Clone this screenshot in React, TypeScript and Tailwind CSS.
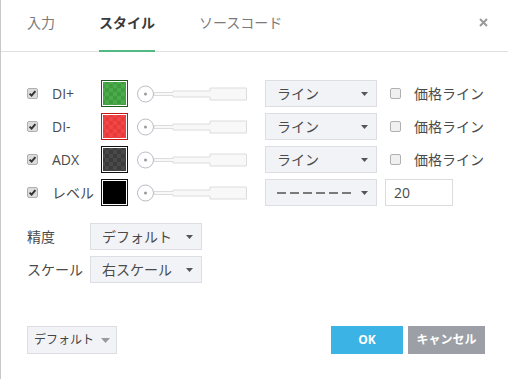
const rows = [
  { label: "DI+", border: "#1e5a1e", a: "#3f9c3f", b: "#4aab4a" },
  { label: "DI-", border: "#c01818", a: "#f04646", b: "#e83a3a" },
  { label: "ADX", border: "#111111", a: "#3c3c3c", b: "#4a4a4a" },
];

function Check({ checked }: { checked: boolean }) {
  return (
    <svg width="11" height="11" viewBox="0 0 11 11" className="shrink-0">
      <rect x="0.5" y="0.5" width="10" height="10" rx="1.5" fill={checked ? "#dcdcdc" : "#f0f0f0"} stroke="#b0b0b0" />
      {checked && <path d="M2.6 5.6 L4.6 7.6 L8.4 3.2" fill="none" stroke="#333" strokeWidth="2" />}
    </svg>
  );
}

function Swatch({ id, border, a, b }: { id: string; border: string; a: string; b: string }) {
  return (
    <svg width="27" height="27" viewBox="0 0 27 27" className="shrink-0">
      <defs>
        <pattern id={id} width="8" height="8" patternUnits="userSpaceOnUse">
          <rect width="8" height="8" fill={a} />
          <rect width="4" height="4" fill={b} />
          <rect x="4" y="4" width="4" height="4" fill={b} />
        </pattern>
      </defs>
      <rect x="0.5" y="0.5" width="26" height="26" fill="white" stroke={border} />
      <rect x="2" y="2" width="23" height="23" fill={`url(#${id})`} />
    </svg>
  );
}

function Slider() {
  return (
    <svg width="110" height="20" viewBox="0 0 110 20" className="shrink-0">
      <path
        d="M17 8.5 H36 V7 H73 V4 H109.5 V16 H73 V13 H36 V11.5 H17 Z"
        fill="#f8f8f8"
        stroke="#dcdcdc"
      />
      <circle cx="8.5" cy="10" r="8" fill="white" stroke="#b8bcc6" />
      <circle cx="8.5" cy="10" r="1.5" fill="#9a9a9a" />
    </svg>
  );
}

function Caret({ big }: { big?: boolean }) {
  return big ? (
    <svg width="9" height="5" viewBox="0 0 9 5"><path d="M0 0 H9 L4.5 5 Z" fill="#9a9a9a" /></svg>
  ) : (
    <svg width="7" height="4" viewBox="0 0 7 4"><path d="M0 0 H7 L3.5 4 Z" fill="#555" /></svg>
  );
}

function Select({ children, className = "" }: { children: React.ReactNode; className?: string }) {
  return (
    <div className={`h-[27px] w-[112px] shrink-0 flex items-center justify-between pl-[11px] pr-[8px] bg-[#f2f3f6] border border-[#dcdee3] text-[14px] text-[#4a4a4a] ${className}`}>
      <span>{children}</span>
      <Caret />
    </div>
  );
}

export default function App() {
  return (
    <div className="w-[508px] h-[379px] bg-white border-l border-[#c8c8c8] font-['Open_Sans','Noto_Sans_CJK_JP',sans-serif] text-[#4a4a4a] flex flex-col">
      <div className="h-[52px] border-b border-[#e0e0e0] flex items-stretch pl-[26px] pr-[20px] shrink-0">
        <div className="pt-[12px] text-[14px] text-[#7a7a7a] leading-[22px]">入力</div>
        <div className="ml-[44px] pt-[12px] text-[14px] font-bold text-[#3a3a3a] leading-[22px] border-b-2 border-[#52b985] -mb-px">スタイル</div>
        <div className="ml-[44px] pt-[12px] text-[14px] text-[#7a7a7a] leading-[22px]">ソースコード</div>
        <div className="ml-auto pt-[18px]">
          <svg width="9" height="9" viewBox="0 0 9 9">
            <path d="M1 1 L8 8 M8 1 L1 8" stroke="#9a9a9a" strokeWidth="2" />
          </svg>
        </div>
      </div>

      <div className="pl-[26px] pt-[28px] flex flex-col gap-[6px]">
        {rows.map((r, i) => (
          <div key={r.label} className="flex items-center h-[27px]">
            <div className="w-[25px]"><Check checked /></div>
            <div className="w-[49px] text-[14px]">{r.label}</div>
            <Swatch id={`sw${i}`} border={r.border} a={r.a} b={r.b} />
            <div className="ml-[9px]"><Slider /></div>
            <Select className="ml-[18px]">ライン</Select>
            <div className="ml-[13px]"><Check checked={false} /></div>
            <div className="ml-[13px] text-[14px]">価格ライン</div>
          </div>
        ))}
        <div className="flex items-center h-[27px]">
          <div className="w-[25px]"><Check checked /></div>
          <div className="w-[49px] text-[14px]">レベル</div>
          <Swatch id="sw3" border="#111" a="#000" b="#000" />
          <div className="ml-[9px]"><Slider /></div>
          <div className="ml-[18px] h-[27px] w-[112px] shrink-0 flex items-center justify-between pl-[11px] pr-[8px] bg-[#f2f3f6] border border-[#dcdee3]">
            <div className="flex gap-[4px]">
              {[0, 1, 2, 3, 4, 5].map((d) => (
                <div key={d} className="w-[9px] h-[2px] bg-[#7a7a7a]" />
              ))}
            </div>
            <Caret />
          </div>
          <div className="ml-[8px] h-[27px] w-[68px] border border-[#dcdcdc] flex items-center pl-[8px] text-[14px]">20</div>
        </div>
      </div>

      <div className="pl-[26px] pt-[17px] flex flex-col gap-[6px]">
        <div className="flex items-center h-[27px]">
          <div className="w-[63px] text-[14px]">精度</div>
          <Select>デフォルト</Select>
        </div>
        <div className="flex items-center h-[27px]">
          <div className="w-[63px] text-[14px]">スケール</div>
          <Select>右スケール</Select>
        </div>
      </div>

      <div className="mt-auto mb-[25px] pl-[26px] pr-[23px] flex items-center">
        <div className="h-[28px] w-[90px] flex items-center justify-center gap-[7px] bg-[#f2f3f6] border border-[#dcdee3] text-[12px] text-[#444]">
          <span>デフォルト</span>
          <Caret big />
        </div>
        <div className="ml-auto h-[28px] w-[72px] flex items-center justify-center bg-[#3bb3e4] text-white text-[12px] font-bold">OK</div>
        <div className="ml-[5px] h-[28px] w-[77px] flex items-center justify-center bg-[#9c9fa5] text-white text-[12px] font-bold">キャンセル</div>
      </div>
    </div>
  );
}
